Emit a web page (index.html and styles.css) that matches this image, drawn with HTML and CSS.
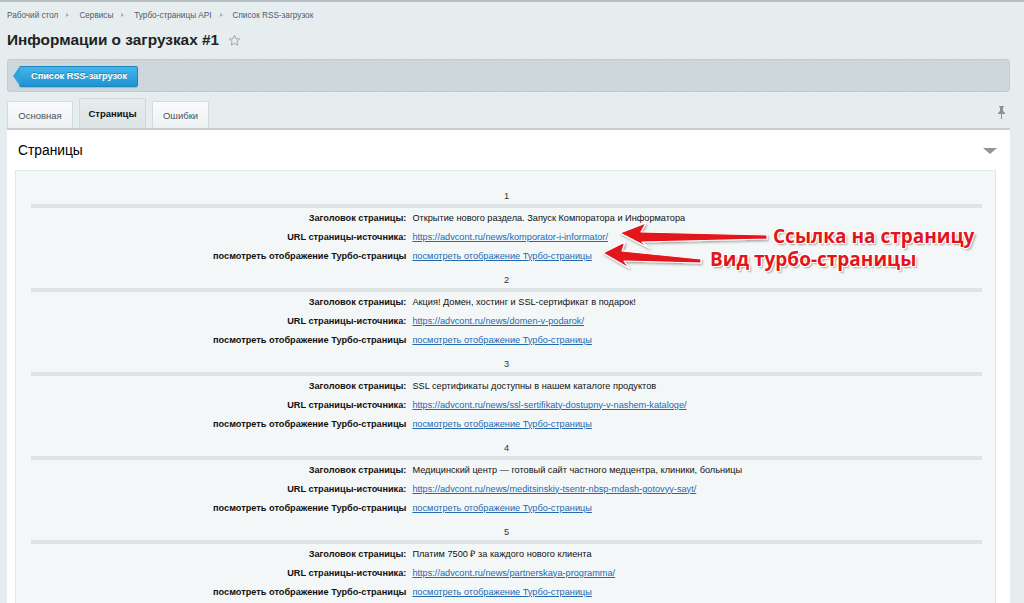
FILE: index.html
```html
<!DOCTYPE html>
<html lang="ru">
<head>
<meta charset="utf-8">
<title>Информации о загрузках #1</title>
<link rel="stylesheet" href="styles.css">
</head>
<body>
<div class="page">
  <nav class="crumbs">
    <a href="#">Рабочий стол</a><span class="sep"></span>
    <a href="#">Сервисы</a><span class="sep"></span>
    <a href="#">Турбо-страницы API</a><span class="sep"></span>
    <a href="#">Список RSS-загрузок</a>
  </nav>
  <h1 class="title">Информации о загрузках #1
    <svg class="star" width="13" height="13" viewBox="0 0 24 24"><path d="M12 2.5l2.9 6.2 6.6.7-5 4.5 1.4 6.6L12 17.2l-5.9 3.3 1.4-6.6-5-4.5 6.6-.7z" fill="none" stroke="#9aa3a6" stroke-width="1.8" stroke-linejoin="round"/></svg>
  </h1>
  <div class="toolbar">
    <a class="btn-back" href="#">Список RSS-загрузок</a>
  </div>
  <div class="tabbar">
    <div class="tabs">
      <span class="tab">Основная</span>
      <span class="tab active">Страницы</span>
      <span class="tab">Ошибки</span>
    </div>
    <svg class="pin" width="9" height="13" viewBox="0 0 9 13"><path d="M2 0h5v1H6v4l2 2v1H5v5H4V8H1V7l2-2V1H2z" fill="#8a9498"/></svg>
  </div>
  <section class="panel">
    <div class="panel-head">
      <h2>Страницы</h2>
      <span class="collapse"></span>
    </div>
    <div class="box">
      <div class="group">
        <div class="num">1</div>
        <div class="row"><span class="lbl">Заголовок страницы:</span><span class="val">Открытие нового раздела. Запуск Компоратора и Информатора</span></div>
        <div class="row"><span class="lbl">URL страницы-источника:</span><span class="val"><a href="#">https://advcont.ru/news/komporator-i-informator/</a></span></div>
        <div class="row"><span class="lbl">посмотреть отображение Турбо-страницы</span><span class="val"><a href="#">посмотреть отображение Турбо-страницы</a></span></div>
      </div>
      <div class="group">
        <div class="num">2</div>
        <div class="row"><span class="lbl">Заголовок страницы:</span><span class="val">Акция! Домен, хостинг и SSL-сертификат в подарок!</span></div>
        <div class="row"><span class="lbl">URL страницы-источника:</span><span class="val"><a href="#">https://advcont.ru/news/domen-v-podarok/</a></span></div>
        <div class="row"><span class="lbl">посмотреть отображение Турбо-страницы</span><span class="val"><a href="#">посмотреть отображение Турбо-страницы</a></span></div>
      </div>
      <div class="group">
        <div class="num">3</div>
        <div class="row"><span class="lbl">Заголовок страницы:</span><span class="val">SSL сертификаты доступны в нашем каталоге продуктов</span></div>
        <div class="row"><span class="lbl">URL страницы-источника:</span><span class="val"><a href="#">https://advcont.ru/news/ssl-sertifikaty-dostupny-v-nashem-kataloge/</a></span></div>
        <div class="row"><span class="lbl">посмотреть отображение Турбо-страницы</span><span class="val"><a href="#">посмотреть отображение Турбо-страницы</a></span></div>
      </div>
      <div class="group">
        <div class="num">4</div>
        <div class="row"><span class="lbl">Заголовок страницы:</span><span class="val">Медицинский центр — готовый сайт частного медцентра, клиники, больницы</span></div>
        <div class="row"><span class="lbl">URL страницы-источника:</span><span class="val"><a href="#">https://advcont.ru/news/meditsinskiy-tsentr-nbsp-mdash-gotovyy-sayt/</a></span></div>
        <div class="row"><span class="lbl">посмотреть отображение Турбо-страницы</span><span class="val"><a href="#">посмотреть отображение Турбо-страницы</a></span></div>
      </div>
      <div class="group">
        <div class="num">5</div>
        <div class="row"><span class="lbl">Заголовок страницы:</span><span class="val">Платим 7500 ₽ за каждого нового клиента</span></div>
        <div class="row"><span class="lbl">URL страницы-источника:</span><span class="val"><a href="#">https://advcont.ru/news/partnerskaya-programma/</a></span></div>
        <div class="row"><span class="lbl">посмотреть отображение Турбо-страницы</span><span class="val"><a href="#">посмотреть отображение Турбо-страницы</a></span></div>
      </div>
    </div>
  </section>

  <svg class="arrows" width="1024" height="603" viewBox="0 0 1024 603">
    <defs>
      <filter id="sh" x="-10%" y="-50%" width="120%" height="200%">
        <feDropShadow dx="1" dy="1.5" stdDeviation="1" flood-color="#000" flood-opacity="0.35"/>
      </filter>
    </defs>
    <g fill="#e3141b" stroke="#fff" stroke-width="1.2" stroke-linejoin="round" filter="url(#sh)">
      <polygon points="620,233 646,223 641,232 767,235 767,239 642,242 649,248"/>
      <polygon points="603,253 625,242 622,251 701,259 701,263 624,261 629,268"/>
    </g>
  </svg>
  <div class="note note1">Ссылка на страницу</div>
  <div class="note note2">Вид турбо-страницы</div>
</div>
</body>
</html>
```

FILE: styles.css
```css
* { box-sizing: border-box; }
html, body { margin: 0; padding: 0; }
body {
  background: #e5edef;
  font-family: "Liberation Sans", Arial, sans-serif;
  color: #000;
  overflow: hidden;
}
.page {
  position: relative;
  height: 603px;
  border-top: 2px solid #b7c0c3;
  padding: 0 14px 0 7px;
}
.crumbs {
  display: flex;
  align-items: center;
  height: 12px;
  margin-top: 7px;
  font-size: 8.2px;
}
.crumbs a { color: #4f5c66; text-decoration: none; }
.crumbs .sep {
  width: 0; height: 0;
  border-left: 3px solid #a6afb3;
  border-top: 2.5px solid transparent;
  border-bottom: 2.5px solid transparent;
  margin: 0 10px 0 8px;
}
.title {
  display: flex;
  align-items: center;
  margin: 9px 0 0 0;
  height: 20px;
  font-size: 15.4px;
  font-weight: bold;
  color: #222;
}
.title .star { margin-left: 9px; margin-top: 1px; }
.toolbar {
  margin-top: 9px;
  height: 33px;
  background: #cdd6da;
  background-image: radial-gradient(rgba(255,255,255,.18) 0.6px, transparent 0.8px);
  background-size: 3px 3px;
  border: 1px solid #c3cdd1;
  border-radius: 3px;
  display: flex;
  align-items: center;
  padding-left: 5px;
}
.btn-back {
  position: relative;
  display: flex;
  align-items: center;
  height: 21px;
  margin-top: 1px;
  padding: 0 10px 0 11px;
  background: linear-gradient(#44b6ea, #1f93d0);
  border: 1px solid #1b86be;
  border-radius: 2px;
  color: #fff;
  font-size: 9.2px;
  font-weight: bold;
  text-decoration: none;
  text-shadow: 0 -1px 0 rgba(0,0,0,.25);
  box-shadow: 0 1px 1px rgba(0,0,0,.15);
  margin-left: 6px;
}
.btn-back::before {
  content: "";
  position: absolute;
  left: -7px; top: -1px;
  width: 0; height: 0;
  border-top: 10.5px solid transparent;
  border-bottom: 10.5px solid transparent;
  border-right: 7px solid #2ea4de;
}
.tabbar {
  margin-top: 6px;
  height: 30px;
  display: flex;
  justify-content: space-between;
  align-items: flex-end;
}
.tabs { display: flex; align-items: flex-end; gap: 6px; }
.tab {
  display: flex;
  align-items: center;
  justify-content: center;
  height: 27px;
  padding: 0 10px;
  font-size: 9.5px;
  color: #485256;
  background: linear-gradient(#fafbfb, #eef2f3);
  border: 1px solid #d3dbde;
  border-bottom: none;
  border-radius: 2px 2px 0 0;
}
.tab:nth-child(1) { width: 66px; }
.tab:nth-child(3) { width: 57px; }
.tab.active {
  height: 30px;
  width: 67px;
  background: linear-gradient(#e6ebed, #dde4e6);
  color: #111;
  font-weight: bold;
  border-color: #d0d8db;
}
.pin { margin: 0 4px 9px 0; }
.panel {
  background: #fff;
  border-top: 2px solid #c5ced1;
  height: 500px;
}
.panel-head {
  height: 40px;
  display: flex;
  align-items: center;
  justify-content: space-between;
  padding: 0 13px 0 11px;
}
.panel-head h2 {
  margin: 0;
  font-size: 13.8px;
  font-weight: normal;
  color: #000;
}
.collapse {
  width: 0; height: 0;
  border-top: 6px solid #8d979b;
  border-left: 7px solid transparent;
  border-right: 7px solid transparent;
  margin-top: 1px;
}
.box {
  margin: 0 14px 0 8px;
  background: #f4f7f8;
  border: 1px solid #e1e7e9;
  border-bottom: none;
  height: 470px;
  padding: 17px 13px 0 15px;
}
.group { padding-bottom: 7px; }
.num {
  height: 20px;
  line-height: 16px;
  text-align: center;
  font-size: 9.2px;
  color: #333;
  border-bottom: 4px solid #dee4e6;
}
.row {
  display: grid;
  grid-template-columns: 40% 1fr;
  height: 19px;
  align-items: center;
  font-size: 9.2px;
}
.lbl {
  text-align: right;
  font-weight: bold;
  padding-right: 5px;
  color: #111;
  white-space: nowrap;
}
.val { padding-left: 1px; color: #111; white-space: nowrap; }
.val a { color: #2369b0; text-decoration: underline; }
.arrows {
  position: absolute;
  left: 0; top: -2px;
  pointer-events: none;
}
.note {
  position: absolute;
  font-family: "Open Sans", "Liberation Sans", sans-serif;
  font-weight: 700;
  font-size: 19px;
  line-height: 22px;
  color: #e3141b;
  white-space: nowrap;
  text-shadow:
    1px 0 0 #fff, -1px 0 0 #fff, 0 1px 0 #fff, 0 -1px 0 #fff,
    1px 1px 0 #fff, -1px -1px 0 #fff, 1px -1px 0 #fff, -1px 1px 0 #fff,
    2px 2px 2px rgba(0,0,0,.35);
}
.note1 { left: 773px; top: 223px; }
.note2 { left: 710px; top: 246px; }
```
